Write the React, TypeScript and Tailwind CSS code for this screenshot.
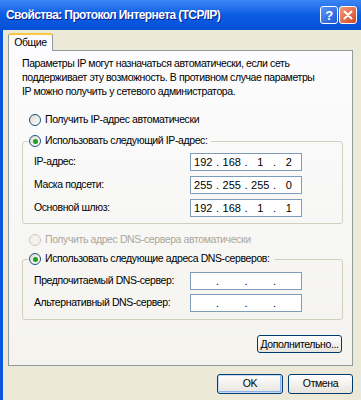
import React from "react";

// Windows XP style "TCP/IP properties" dialog

function Radio({ checked, disabled, label }: { checked?: boolean; disabled?: boolean; label: string }) {
  return (
    <div className="flex items-center gap-[4px] h-[14px] whitespace-nowrap">
      <span
        className={
          disabled
            ? "w-[12px] h-[12px] rounded-full border border-[#cac8bb] bg-[#f4f3ee] flex items-center justify-center"
            : "w-[12px] h-[12px] rounded-full border border-[#1c5180] bg-gradient-to-br from-[#dcdad0] to-white flex items-center justify-center"
        }
      >
        {checked && <span className="w-[5px] h-[5px] rounded-full bg-[#21a121]" />}
      </span>
      <span className={disabled ? "text-[#aca899]" : "text-black"}>{label}</span>
    </div>
  );
}

function IpBox({ parts }: { parts: string[] }) {
  return (
    <div className="w-[112px] h-[18px] border border-[#7f9db9] bg-white grid grid-cols-[1fr_4px_1fr_4px_1fr_4px_1fr] items-center text-center leading-none tracking-normal text-[11px]">
      <span>{parts[0]}</span>
      <span>.</span>
      <span>{parts[1]}</span>
      <span>.</span>
      <span>{parts[2]}</span>
      <span>.</span>
      <span>{parts[3]}</span>
    </div>
  );
}

function Row({ label, parts }: { label: string; parts: string[] }) {
  return (
    <div className="flex items-center justify-between pl-[11px] pr-[40px] whitespace-nowrap">
      <span>{label}</span>
      <IpBox parts={parts} />
    </div>
  );
}

function XpButton({ children, primary, className }: { children: React.ReactNode; primary?: boolean; className: string }) {
  return (
    <button
      className={
        (primary
          ? "border border-[#003c74] rounded-[3px] bg-gradient-to-b from-white to-[#e6e4dc] shadow-[inset_0_0_0_1px_#c4dbf7,inset_-1px_-1px_0_1px_#8eb0ea] whitespace-nowrap "
          : "border border-[#003c74] rounded-[3px] bg-gradient-to-b from-white to-[#e6e4dc] whitespace-nowrap ") + className
      }
    >
      {children}
    </button>
  );
}

export default function App() {
  return (
    <div className="w-[361px] h-[400px] overflow-hidden bg-[#0a55de] flex flex-col font-['Liberation_Sans',Arial,sans-serif] text-[10.5px] tracking-[-0.4px] text-black">
      {/* Title bar */}
      <div className="h-[30px] shrink-0 flex items-center pl-[6px] pr-[4px] bg-gradient-to-b from-[#3b86f5] via-[#0a5ce4] to-[#0850d6]">
        <span className="text-white font-bold text-[12px] tracking-[-0.6px] whitespace-nowrap [text-shadow:1px_1px_0_#0a1e8c]">
          Свойства: Протокол Интернета (TCP/IP)
        </span>
        <div className="ml-auto flex gap-[1px]">
          <div className="w-[18px] h-[18px] rounded-[3px] border border-white bg-gradient-to-br from-[#5a95f5] to-[#2358d8] flex items-center justify-center text-white font-bold text-[13px] leading-none">
            ?
          </div>
          <div className="w-[18px] h-[18px] rounded-[3px] border border-white bg-gradient-to-br from-[#f09a7a] to-[#d7421c] flex items-center justify-center">
            <svg width="10" height="10" viewBox="0 0 10 10">
              <path d="M1.5 1.5 L8.5 8.5 M8.5 1.5 L1.5 8.5" stroke="white" strokeWidth="2" strokeLinecap="round" />
            </svg>
          </div>
        </div>
      </div>

      {/* Body */}
      <div className="flex-1 ml-[3px] bg-[#ece9d8] pl-[5px] pt-[3px]">
        {/* Tab */}
        <div className="relative z-10 -mb-px w-[45px] h-[18px] border border-b-0 border-[#919b9c] border-t-[#ffc83c] border-t-2 rounded-t-[3px] bg-[#fcfcfe] flex items-center justify-center">
          Общие
        </div>

        {/* Tab panel */}
        <div className="w-[345px] h-[316px] border border-[#919b9c] bg-gradient-to-b from-[#fcfcfe] to-[#f4f3ee] flex flex-col">
          <p className="mt-[5px] pl-[13px] leading-[14px] whitespace-nowrap">
            Параметры IP могут назначаться автоматически, если сеть
            <br />
            поддерживает эту возможность. В противном случае параметры
            <br />
            IP можно получить у сетевого администратора.
          </p>

          <div className="mt-[15px] pl-[20px]">
            <Radio label="Получить IP-адрес автоматически" />
          </div>

          <fieldset className="mt-[7px] ml-[13px] w-[321px] border border-[#d0d0bf] rounded-[3px] pb-[6px]">
            <legend className="ml-[5px] px-[1px] pr-[4px]">
              <Radio checked label="Использовать следующий IP-адрес:" />
            </legend>
            <div className="pt-[5px] flex flex-col gap-[5px]">
              <Row label="IP-адрес:" parts={["192", "168", "1", "2"]} />
              <Row label="Маска подсети:" parts={["255", "255", "255", "0"]} />
              <Row label="Основной шлюз:" parts={["192", "168", "1", "1"]} />
            </div>
          </fieldset>

          <div className="mt-[9px] pl-[20px]">
            <Radio disabled label="Получить адрес DNS-сервера автоматически" />
          </div>

          <fieldset className="mt-[5px] ml-[13px] w-[321px] border border-[#d0d0bf] rounded-[3px] pb-[7px]">
            <legend className="ml-[5px] px-[1px] pr-[4px]">
              <Radio checked label="Использовать следующие адреса DNS-серверов:" />
            </legend>
            <div className="pt-[6px] flex flex-col gap-[4px]">
              <Row label="Предпочитаемый DNS-сервер:" parts={["", "", "", ""]} />
              <Row label="Альтернативный DNS-сервер:" parts={["", "", "", ""]} />
            </div>
          </fieldset>

          <div className="mt-[15px] pr-[10px] flex justify-end">
            <XpButton className="w-[85px] h-[18px] leading-none">
              <span className="underline">Д</span>ополнительно...
            </XpButton>
          </div>
        </div>

        {/* Dialog buttons */}
        <div className="mt-[8px] pr-[8px] flex justify-end gap-[5px]">
          <XpButton primary className="w-[66px] h-[20px]">
            OK
          </XpButton>
          <XpButton className="w-[65px] h-[20px]">Отмена</XpButton>
        </div>
      </div>
    </div>
  );
}
